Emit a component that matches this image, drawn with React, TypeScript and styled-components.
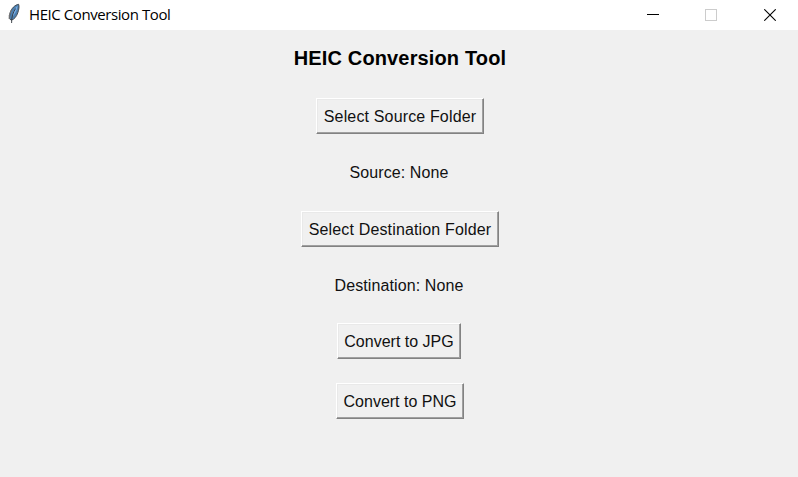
import React from "react";
import styled, { createGlobalStyle } from "styled-components";

const GlobalStyle = createGlobalStyle`
  body { margin: 0; background: #f0f0f0; overflow: hidden; }
  * { box-sizing: border-box; }
`;

const Window = styled.div`
  display: flex;
  flex-direction: column;
  width: 798px;
  height: 477px;
  background: #f0f0f0;
  color: #000;
`;

const TitleBar = styled.header`
  display: flex;
  align-items: center;
  height: 30px;
  padding-left: 6px;
  background: #fff;
`;

const Caption = styled.span`
  flex: 1;
  margin: -3px 0 0 7px;
  font: 15px/20px "Open Sans", "Noto Sans", sans-serif;
  letter-spacing: -0.42px;
  white-space: nowrap;
`;

const WindowControl = styled.button<{ $disabled?: boolean }>`
  display: flex;
  align-items: center;
  justify-content: center;
  width: 58px;
  height: 28px;
  padding: 0;
  border: 0;
  background: transparent;
  color: ${(p) => (p.$disabled ? "#ccc" : "#000")};
`;

const CloseControl = styled(WindowControl)`
  padding-left: 2px;
`;

const Content = styled.main`
  display: flex;
  flex-direction: column;
  align-items: center;
  padding: 16px 0 0 2px;
  font-family: "Liberation Sans", Arial, sans-serif;
`;

const Heading = styled.h1`
  margin: 0 0 28px;
  font-size: 20px;
  line-height: 24px;
  font-weight: 700;
  letter-spacing: 0.14px;
`;

const PushButton = styled.button<{ $width: number; $gap: number; $spacing: number; $inset?: number }>`
  width: ${(p) => p.$width}px;
  height: 36px;
  margin: 0 ${(p) => p.$inset ?? 0}px ${(p) => p.$gap}px 0;
  padding: 1px 0 0;
  border: 1px solid;
  border-color: #fff #828282 #828282 #fff;
  box-shadow: inset -1px -1px #a0a0a0, inset 1px 1px #e9e9e9;
  background: #f0f0f0;
  color: #111;
  font: 16px/20px "Liberation Sans", Arial, sans-serif;
  letter-spacing: ${(p) => p.$spacing}px;
  white-space: nowrap;
`;

const Status = styled.div<{ $gap: number }>`
  height: 24px;
  margin: 0 2px ${(p) => p.$gap}px 0;
  color: #111;
  font-size: 16px;
  line-height: 24px;
  letter-spacing: 0.1px;
`;

const FeatherIcon = () => (
  <svg width="16" height="24" viewBox="0 0 16 24">
    <path d="M12.6 1.3C9 1.8 5.3 5.5 4 10L3.3 15.5L5.2 17.2C8.2 16.5 10.6 13.5 11.8 9.8C13 6.4 13.4 3.2 12.6 1.3Z" fill="#4d7fae" stroke="#3c4248" strokeWidth=".9" />
    <path d="M11.6 2.8C8.5 5.3 6.9 9 6.2 13.8C8.7 11.4 11.2 7.3 11.6 2.8Z" fill="#79afe8" />
    <path d="M9.6 5.5C7 9.5 5.4 14 5.6 20" fill="none" stroke="#30363c" strokeWidth=".9" />
    <path d="M5.5 6.8L3.2 12.5L3.3 16" fill="none" stroke="#777" strokeWidth="1" />
  </svg>
);

export default function App() {
  return (
    <>
      <GlobalStyle />
      <Window>
        <TitleBar>
          <FeatherIcon />
          <Caption>HEIC Conversion Tool</Caption>
          <WindowControl aria-label="Minimize">
            <svg width="12" height="12" shapeRendering="crispEdges"><path d="M0 5.5H12" stroke="currentColor" /></svg>
          </WindowControl>
          <WindowControl aria-label="Maximize" $disabled>
            <svg width="12" height="12" shapeRendering="crispEdges"><path d="M.5 .5H11.5V11.5H.5Z" fill="none" stroke="currentColor" /></svg>
          </WindowControl>
          <CloseControl aria-label="Close">
            <svg width="12" height="12"><path d="M.3 .3L11.7 11.7M11.7 .3L.3 11.7" stroke="currentColor" strokeWidth="1.1" /></svg>
          </CloseControl>
        </TitleBar>
        <Content>
          <Heading>HEIC Conversion Tool</Heading>
          <PushButton $width={168} $gap={27} $spacing={0.15}>Select Source Folder</PushButton>
          <Status $gap={26}>Source: None</Status>
          <PushButton $width={198} $gap={27} $spacing={0.15}>Select Destination Folder</PushButton>
          <Status $gap={25}>Destination: None</Status>
          <PushButton $width={124} $gap={24} $spacing={0} $inset={2}>Convert to JPG</PushButton>
          <PushButton $width={128} $gap={0} $spacing={0}>Convert to PNG</PushButton>
        </Content>
      </Window>
    </>
  );
}
